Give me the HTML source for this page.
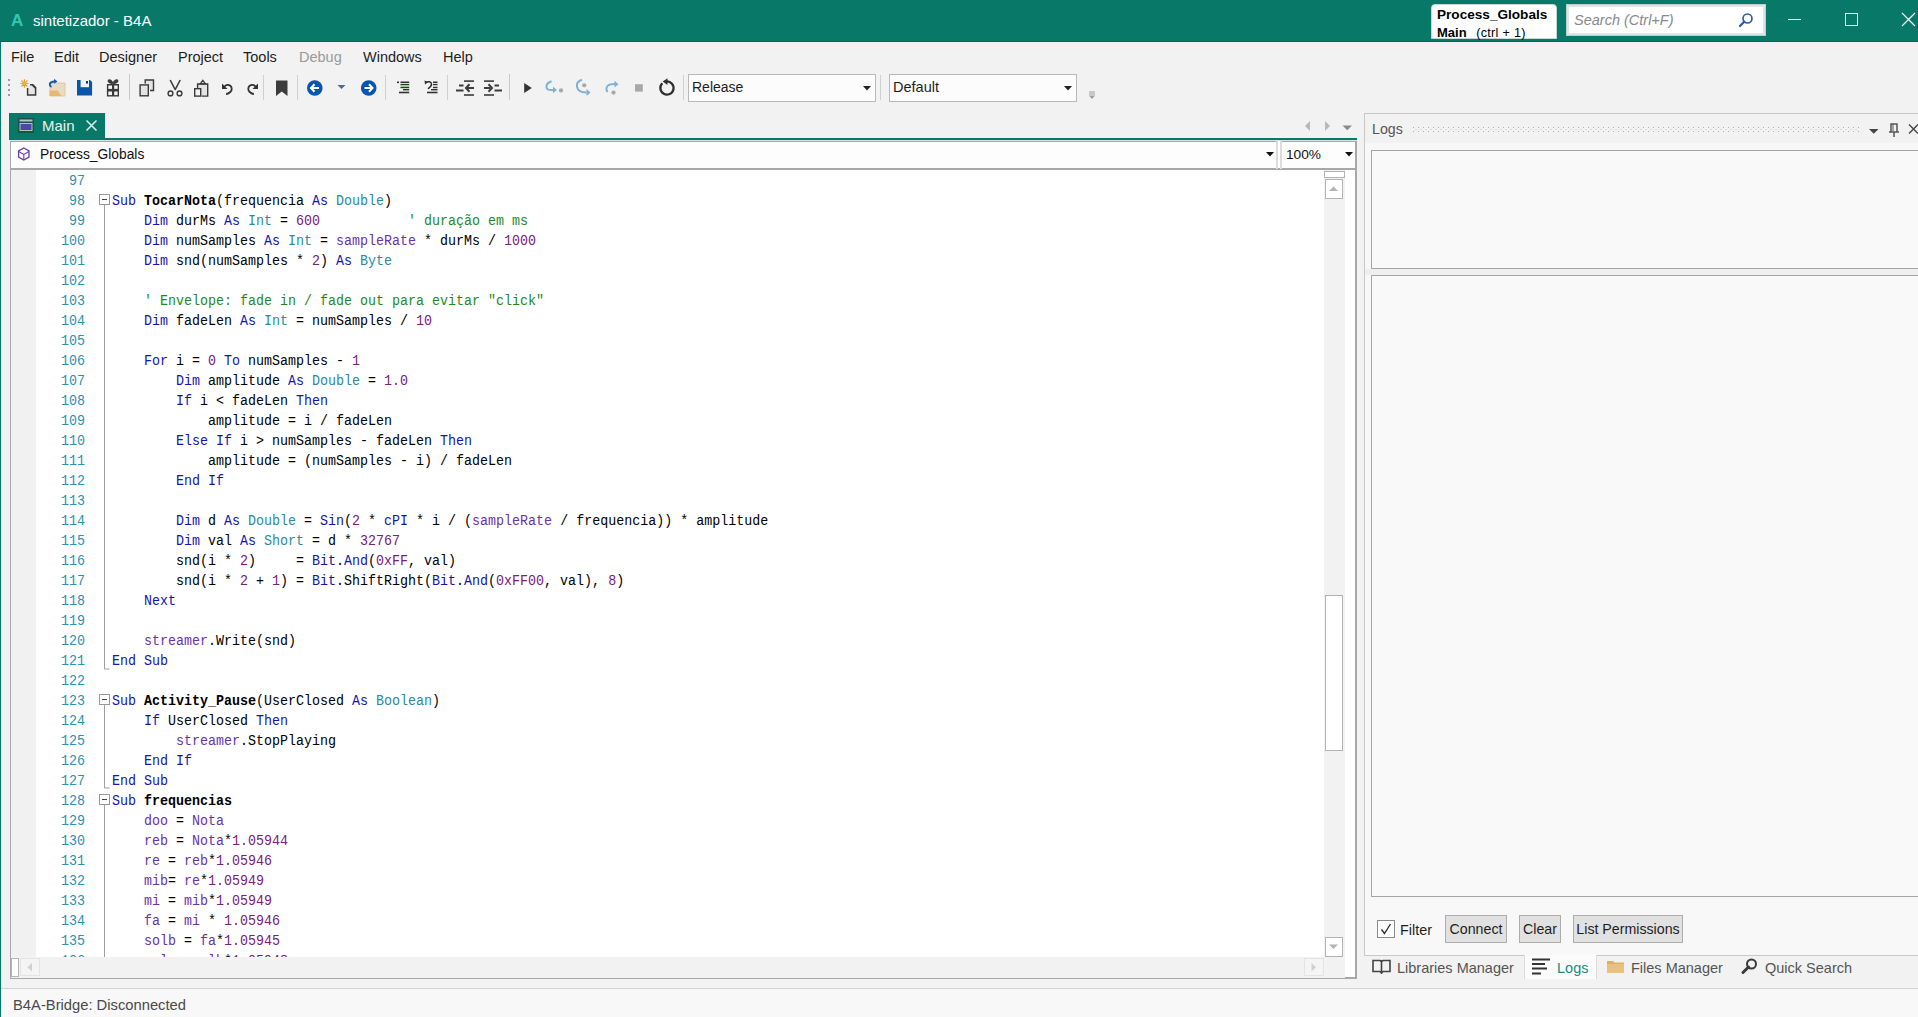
<!DOCTYPE html>
<html><head><meta charset="utf-8">
<style>
*{margin:0;padding:0;box-sizing:border-box}
html,body{width:1918px;height:1017px;overflow:hidden;background:#f2f2f2;font-family:"Liberation Sans",sans-serif;position:relative}
.a{position:absolute}
svg{position:absolute;overflow:visible}
#title{left:0;top:0;width:1918px;height:42px;background:#087969;border-bottom:1px solid #1d5c54}
.menu{top:47px;font-size:14.5px;color:#1e1e1e;white-space:nowrap;line-height:20px}
.code{left:112px;font-family:"Liberation Mono",monospace;font-size:14.5px;white-space:pre;line-height:20px;color:#000;transform:scaleX(0.9195);transform-origin:0 0;margin-top:1px}
.ln{left:45px;font-family:"Liberation Mono",monospace;font-size:14.5px;color:#2b91af;line-height:20px;text-align:right;width:40px;transform:scaleX(0.9195);transform-origin:100% 0;margin-top:1px}
.k{color:#1616a8}
.t{color:#2b8a9c}
.n{color:#7a2078}
.c{color:#1e8a1e}
.g{color:#6a32a8}
.b{font-weight:bold}
.sep{width:1px;height:25px;background:#cfcfcf;top:75px}
.btn{background:#e1e1e1;border:1px solid #adadad;font-size:14.2px;color:#1e1e1e;line-height:27px;text-align:center;white-space:nowrap}
.ui{font-size:15px;color:#1e1e1e;white-space:nowrap}
</style></head><body>
<!-- title bar -->
<div class="a" id="title"></div>
<div class="a" style="left:0;top:43px;width:1918px;height:1px;background:#e2f8f4"></div>
<div class="a" style="left:0;top:42px;width:1px;height:975px;background:#087969"></div>
<div class="a" style="left:1px;top:44px;width:1px;height:973px;background:#e2f8f4"></div>
<div class="a" style="left:11px;top:9px;font-size:17px;font-weight:bold;color:#30c8b0;line-height:24px">A</div>
<div class="a" style="left:33px;top:11px;font-size:15px;color:#fff;line-height:20px;white-space:nowrap">sintetizador - B4A</div>
<div class="a" style="left:1431px;top:4px;width:126px;height:35px;background:#fff;border:1px solid #c8d8d4;border-radius:4px 4px 0 0"></div>
<div class="a" style="left:1437px;top:6px;font-size:13.6px;font-weight:bold;color:#000;line-height:18px;white-space:nowrap">Process_Globals</div>
<div class="a" style="left:1437px;top:24px;font-size:13px;font-weight:bold;color:#000;line-height:17px;white-space:nowrap">Main <span style="font-weight:normal;font-size:12.6px;margin-left:6px;letter-spacing:0.3px">(ctrl + 1)</span></div>
<div class="a" style="left:1566px;top:4px;width:200px;height:32px;background:#dde6e4;border:1px solid #c0cfcc"></div>
<div class="a" style="left:1569px;top:7px;width:194px;height:26px;background:#fff"></div>
<div class="a" style="left:1574px;top:11px;font-size:14.5px;font-style:italic;color:#8a8a8a;line-height:18px;white-space:nowrap">Search (Ctrl+F)</div>
<svg style="left:1738px;top:12px" width="16" height="16" viewBox="0 0 16 16"><circle cx="9.5" cy="6.5" r="4.5" fill="none" stroke="#2a5a9a" stroke-width="1.6"/><line x1="6.3" y1="9.7" x2="2" y2="14" stroke="#2a5a9a" stroke-width="2.2" stroke-linecap="round"/></svg>
<div class="a" style="left:1788px;top:19px;width:13px;height:1px;background:#fff"></div>
<div class="a" style="left:1845px;top:13px;width:13px;height:13px;border:1px solid #fff"></div>
<svg style="left:1901px;top:12px" width="15" height="15" viewBox="0 0 15 15"><path d="M1 1L14 14M14 1L1 14" stroke="#fff" stroke-width="1.2"/></svg>

<!-- menu -->
<div class="a menu" style="left:11px">File</div>
<div class="a menu" style="left:54px">Edit</div>
<div class="a menu" style="left:99px">Designer</div>
<div class="a menu" style="left:178px">Project</div>
<div class="a menu" style="left:243px">Tools</div>
<div class="a menu" style="left:299px;color:#9a9a9a">Debug</div>
<div class="a menu" style="left:363px">Windows</div>
<div class="a menu" style="left:443px">Help</div>

<!-- toolbar -->
<svg style="left:0;top:0" width="1100" height="110" viewBox="0 0 1100 110">
<g fill="#9c9c9c"><rect x="8" y="79" width="2" height="2"/><rect x="8" y="84" width="2" height="2"/><rect x="8" y="89" width="2" height="2"/><rect x="8" y="94" width="2" height="2"/></g>
<!-- new -->
<g stroke="#e8a030" stroke-width="1.2"><path d="M24.4 79.3v8.4M20.2 83.5h8.4M21.4 80.5l6 6M27.4 80.5l-6 6"/></g><circle cx="24.4" cy="83.5" r="1.2" fill="#f0c020"/>
<path d="M27.6 88v7h8v-7.5l-2.8-2.8H30" fill="#e6e6e6" stroke="#3a3a3a" stroke-width="1.5"/><path d="M32.3 85l3.5 3.5" stroke="#3a3a3a" stroke-width="1.5"/>
<!-- open -->
<path d="M50 83h15v13h-15z" fill="#eadcc4" stroke="#e4c89a" stroke-width="1"/>
<path d="M49.5 90.5h8l4 5.5H49.5z" fill="#e8b870"/>
<path d="M51.5 87c-2.5-1.2-2.5-4.5 1.2-5.3l2.5-0.5" stroke="#1a5aa8" stroke-width="1.9" fill="none"/><path d="M54 78.8l3.5 2.7-3.5 2.3z" fill="#1a5aa8"/>
<!-- save -->
<path d="M77 80h13l2.1 2.1V95.4H77z" fill="#0a55aa"/><rect x="80.6" y="80" width="8.4" height="7.2" fill="#eef2f8"/><rect x="86" y="81" width="2" height="2.6" fill="#0a3a7a"/>
<!-- gift -->
<rect x="106.9" y="84" width="12.1" height="12.5" fill="#3a3a3a"/>
<g fill="#f4f4f4"><rect x="108.3" y="85.5" width="3.7" height="3.4"/><rect x="114.2" y="85.5" width="3.4" height="3.4"/><rect x="108.3" y="91.5" width="3.7" height="3.6"/><rect x="114.2" y="91.5" width="3.4" height="3.6"/></g>
<path d="M112.8 83.5c-1-2.5-3.5-4.5-4.3-3-0.6 1.2 1.5 2.8 4.3 3M113.2 83.5c1-2.5 3.5-4.5 4.3-3 0.6 1.2-1.5 2.8-4.3 3" stroke="#3a3a3a" stroke-width="1.6" fill="#3a3a3a"/>
<rect x="129" y="74" width="1" height="26" fill="#c8c8c8"/>
<!-- copy -->
<path d="M145.2 83.5v-3.5h8.3v10.5h-3.5" fill="#e4e4e4" stroke="#3a3a3a" stroke-width="1.4"/>
<rect x="140.1" y="84.9" width="8.2" height="10.9" fill="#e4e4e4" stroke="#3a3a3a" stroke-width="1.4"/>
<!-- cut -->
<path d="M170.2 80l5.2 10M180.2 80l-5.2 10" stroke="#3a3a3a" stroke-width="1.6" fill="none"/>
<circle cx="170.5" cy="93.4" r="2.4" fill="none" stroke="#3a3a3a" stroke-width="1.4"/><circle cx="179.5" cy="93.4" r="2.4" fill="none" stroke="#3a3a3a" stroke-width="1.4"/>
<!-- paste -->
<path d="M197.6 88v-4h10.1v12.1h-6" fill="#e4e4e4" stroke="#3a3a3a" stroke-width="1.4"/><path d="M200.2 83.8l2.6-3.5 2.6 3.5z" fill="none" stroke="#3a3a3a" stroke-width="1.3"/>
<rect x="194.7" y="88.7" width="6" height="7.4" fill="#f4f4f4" stroke="#3a3a3a" stroke-width="1.4"/>
<!-- undo / redo -->
<path d="M224.5 86.5c1.5-2 4-2.2 5.8-0.8s2 4.5 0 6.3-3 2-4.2 2" stroke="#333" stroke-width="1.8" fill="none"/><path d="M222 83.5v5.5h5.5z" fill="#333"/>
<path d="M255.5 86.5c-1.5-2-4-2.2-5.8-0.8s-2 4.5 0 6.3 3 2 4.2 2" stroke="#333" stroke-width="1.8" fill="none"/><path d="M258 83.5v5.5h-5.5z" fill="#333"/>
<rect x="263" y="75" width="1" height="25" fill="#d0d0d0"/>
<!-- bookmark -->
<path d="M276 80.5h11.5V96l-5.75-4.5L276 96z" fill="#3c3c3c"/>
<rect x="297" y="75" width="1" height="25" fill="#d0d0d0"/>
<!-- back / forward -->
<circle cx="314.8" cy="88" r="7.8" fill="#0a55b0"/><path d="M311 88h8M314.5 84.3L311 88l3.5 3.7" stroke="#fff" stroke-width="2" fill="none"/>
<path d="M337.5 85h8l-4 4z" fill="#4a6aa8"/>
<circle cx="368.7" cy="88" r="7.8" fill="#0a55b0"/><path d="M364.5 88h8M369 84.3l3.5 3.7-3.5 3.7" stroke="#fff" stroke-width="2" fill="none"/>
<rect x="385" y="75" width="1" height="25" fill="#d0d0d0"/>
<!-- comment / uncomment -->
<g fill="#333"><rect x="397" y="81.5" width="2" height="1.6"/><rect x="400.5" y="81.5" width="8.7" height="1.6"/><rect x="400.5" y="84" width="8.7" height="1.2"/><rect x="400.5" y="87" width="8.7" height="1.2"/><rect x="403" y="89" width="6.2" height="1.4"/><rect x="399" y="91.7" width="10.2" height="1.6"/></g>
<rect x="400.5" y="85.2" width="8.7" height="1.8" fill="#8fd08f"/>
<g fill="#333"><rect x="433" y="81.5" width="4.5" height="1.6"/><rect x="433" y="84" width="4.5" height="1.2"/><rect x="433" y="87" width="4.5" height="1.2"/><rect x="431" y="89" width="6.5" height="1.4"/><rect x="427" y="91.7" width="10.5" height="1.6"/></g>
<rect x="433" y="85.2" width="4.5" height="1.8" fill="#a8d8a8"/>
<path d="M426 82.5c2.5-1.5 5.5-1 5.5 1.8 0 2-2 3.5-3.5 4.5" stroke="#2e2e2e" stroke-width="1.5" fill="none"/><path d="M424.5 80.5l0.5 4 3-2.5z" fill="#2e2e2e"/>
<rect x="447" y="75" width="1" height="25" fill="#d0d0d0"/>
<!-- outdent / indent -->
<g fill="#3c3c3c"><rect x="464" y="80.3" width="10" height="1.6"/><rect x="464" y="94.2" width="10" height="1.6"/><rect x="459" y="84.5" width="4.5" height="2"/><rect x="456" y="89.5" width="7.5" height="2"/><rect x="467" y="87" width="7" height="2"/>
<rect x="484" y="80.3" width="10" height="1.6"/><rect x="484" y="94.2" width="10" height="1.6"/><rect x="494.5" y="84.5" width="4.5" height="2"/><rect x="494.5" y="89.5" width="7.5" height="2"/><rect x="484" y="87" width="6.5" height="2"/></g>
<path d="M469.5 84.3L466 88l3.5 3.7" stroke="#3c3c3c" stroke-width="2" fill="none"/>
<path d="M488.5 84.3L492 88l-3.5 3.7" stroke="#3c3c3c" stroke-width="2" fill="none"/>
<rect x="509" y="74" width="1" height="26" fill="#c8c8c8"/>
<!-- play -->
<path d="M524.2 83l7.6 5-7.6 5z" fill="#333"/>
<!-- step icons -->
<path d="M551.5 81.3c-3.5 1.2-5.5 3.5-5 6.3 0.5 2.3 3 2.6 6.5 2.4" stroke="#80b0d8" stroke-width="2" fill="none"/><path d="M553 86.8l4 3.2-4 3.2z" fill="#80b0d8"/><circle cx="561" cy="90.4" r="2.1" fill="#a8a8a8"/>
<path d="M582 79.8c-3.5 1-5.5 3.8-5 7 0.6 3.8 4.5 5.5 9.5 5.8" stroke="#80b0d8" stroke-width="2" fill="none"/><path d="M586.5 89l4 3.5-4 3.5z" fill="#80b0d8"/><circle cx="584.2" cy="85.3" r="2.1" fill="#a8a8a8"/>
<path d="M607.5 92c-1.5-2-1.5-5 0.5-6.5 2-1.6 5-1.6 8.5-1.4" stroke="#80b0d8" stroke-width="2" fill="none"/><path d="M614.5 80.8l4 3.4-4 3.4z" fill="#80b0d8"/><circle cx="613.5" cy="92.6" r="2.1" fill="#a8a8a8"/>
<rect x="635" y="84.2" width="7.8" height="7.4" fill="#a8a8a8"/>
<!-- reload -->
<path d="M662.3 83.3a6.6 6.6 0 1 0 4.2-1.9" stroke="#2e2e2e" stroke-width="2.3" fill="none"/><path d="M667.5 78.3v6.6l-4.8-3.4z" fill="#2e2e2e"/>
<rect x="683" y="75" width="1" height="25" fill="#d0d0d0"/>
<rect x="880" y="75" width="1" height="25" fill="#d0d0d0"/>
<path d="M1089 92h6M1089 94h6" stroke="#a0a0a0" stroke-width="1" fill="none"/><path d="M1088.8 95.5h6.4l-3.2 3.5z" fill="#a0a0a0"/>
</svg>
<div class="a" style="left:688px;top:74px;width:188px;height:28px;background:#fcfcfc;border:1px solid #b9b9b9"></div>
<div class="a ui" style="left:692px;top:78px;line-height:19px;font-size:14px">Release</div>
<svg style="left:863px;top:86px" width="8" height="5"><path d="M0 0h8L4 4.5z" fill="#222"/></svg>
<div class="a" style="left:889px;top:74px;width:188px;height:28px;background:#fcfcfc;border:1px solid #b9b9b9"></div>
<div class="a ui" style="left:893px;top:78px;line-height:19px;font-size:14.5px">Default</div>
<svg style="left:1064px;top:86px" width="8" height="5"><path d="M0 0h8L4 4.5z" fill="#222"/></svg>

<!-- document tab strip -->
<div class="a" style="left:9px;top:113px;width:96px;height:26px;background:#087969"></div>
<svg style="left:18px;top:118px" width="17" height="15" viewBox="0 0 17 15"><rect x="0" y="0" width="16" height="15" fill="#1f4f48"/><rect x="1.5" y="1.5" width="13" height="2" fill="#a8c8c0"/><rect x="1.5" y="5" width="13" height="8" fill="#a8c8c0"/><rect x="2.5" y="6" width="11" height="6" fill="#4a4aa0"/></svg>
<div class="a" style="left:42px;top:117px;font-size:15px;color:#e6f5f1;line-height:18px">Main</div>
<svg style="left:86px;top:120px" width="11" height="11" viewBox="0 0 11 11"><path d="M0.5 0.5l10 10M10.5 0.5l-10 10" stroke="#dff2ee" stroke-width="1.5"/></svg>
<div class="a" style="left:9px;top:138px;width:1348px;height:2px;background:#087969"></div>
<svg style="left:1303px;top:120px" width="52" height="14" viewBox="0 0 52 14"><path d="M7 1v10L2 6z" fill="#b8b8b8"/><path d="M22 1v10l5-5z" fill="#b8b8b8"/><path d="M39.5 5.5h9.5l-4.75 4.75z" fill="#8a8a8a"/></svg>

<!-- editor frame -->
<div class="a" style="left:10px;top:140px;width:1347px;height:839px;background:#fff;border:1px solid #a8a8a8;border-width:2px 2px 2px 1px;border-top-color:#a8a8a8"></div>
<div class="a" style="left:10px;top:140px;width:1347px;height:1px;background:#d8e4e2"></div>
<!-- combo row -->
<div class="a" style="left:11px;top:142px;width:1267px;height:26px;background:#fdfdfd"></div>
<div class="a" style="left:1278px;top:141px;width:3px;height:28px;background:#fff"></div>
<div class="a" style="left:1281px;top:142px;width:74px;height:26px;background:#fdfdfd"></div>
<div class="a" style="left:11px;top:168px;width:1344px;height:2px;background:#a8a8a8"></div>
<div class="a" style="left:1276px;top:141px;width:2px;height:28px;background:#dcdcdc"></div>
<div class="a" style="left:1280px;top:141px;width:2px;height:28px;background:#dcdcdc"></div>
<svg style="left:17px;top:147px" width="14" height="15" viewBox="0 0 14 15"><path d="M6.8 1l5.2 3v6L6.8 13 1.6 10V4z" fill="none" stroke="#6a3ea8" stroke-width="1.3"/><path d="M1.6 4.6L6.8 7.4 12 4.6M6.8 7.4V13" fill="none" stroke="#6a3ea8" stroke-width="1.1"/></svg>
<div class="a ui" style="left:40px;top:145px;line-height:19px;color:#111;font-size:13.8px">Process_Globals</div>
<svg style="left:1266px;top:152px" width="8" height="5"><path d="M0 0h8L4 4.5z" fill="#111"/></svg>
<div class="a ui" style="left:1286px;top:145px;line-height:19px;color:#111;font-size:13.7px">100%</div>
<svg style="left:1345px;top:152px" width="8" height="5"><path d="M0 0h8L4 4.5z" fill="#111"/></svg>

<!-- gutter -->
<div class="a" style="left:11px;top:170px;width:25px;height:787px;background:#f1f1f1"></div>
<!-- code -->
<div class="a" style="left:0;top:170px;width:1324px;height:787px;overflow:hidden">
<div class="ln a" style="top:0px">97</div>
<div class="ln a" style="top:20px">98</div>
<div class="code a" style="top:20px"><span class="k">Sub</span> <span class="b">TocarNota</span>(frequencia <span class="k">As</span> <span class="t">Double</span>)</div>
<div class="ln a" style="top:40px">99</div>
<div class="code a" style="top:40px">    <span class="k">Dim</span> durMs <span class="k">As</span> <span class="t">Int</span> = <span class="n">600</span>           <span class="c">' duração em ms</span></div>
<div class="ln a" style="top:60px">100</div>
<div class="code a" style="top:60px">    <span class="k">Dim</span> numSamples <span class="k">As</span> <span class="t">Int</span> = <span class="g">sampleRate</span> * durMs / <span class="n">1000</span></div>
<div class="ln a" style="top:80px">101</div>
<div class="code a" style="top:80px">    <span class="k">Dim</span> snd(numSamples * <span class="n">2</span>) <span class="k">As</span> <span class="t">Byte</span></div>
<div class="ln a" style="top:100px">102</div>
<div class="ln a" style="top:120px">103</div>
<div class="code a" style="top:120px">    <span class="c">' Envelope: fade in / fade out para evitar "click"</span></div>
<div class="ln a" style="top:140px">104</div>
<div class="code a" style="top:140px">    <span class="k">Dim</span> fadeLen <span class="k">As</span> <span class="t">Int</span> = numSamples / <span class="n">10</span></div>
<div class="ln a" style="top:160px">105</div>
<div class="ln a" style="top:180px">106</div>
<div class="code a" style="top:180px">    <span class="k">For</span> i = <span class="n">0</span> <span class="k">To</span> numSamples - <span class="n">1</span></div>
<div class="ln a" style="top:200px">107</div>
<div class="code a" style="top:200px">        <span class="k">Dim</span> amplitude <span class="k">As</span> <span class="t">Double</span> = <span class="n">1.0</span></div>
<div class="ln a" style="top:220px">108</div>
<div class="code a" style="top:220px">        <span class="k">If</span> i &lt; fadeLen <span class="k">Then</span></div>
<div class="ln a" style="top:240px">109</div>
<div class="code a" style="top:240px">            amplitude = i / fadeLen</div>
<div class="ln a" style="top:260px">110</div>
<div class="code a" style="top:260px">        <span class="k">Else If</span> i &gt; numSamples - fadeLen <span class="k">Then</span></div>
<div class="ln a" style="top:280px">111</div>
<div class="code a" style="top:280px">            amplitude = (numSamples - i) / fadeLen</div>
<div class="ln a" style="top:300px">112</div>
<div class="code a" style="top:300px">        <span class="k">End If</span></div>
<div class="ln a" style="top:320px">113</div>
<div class="ln a" style="top:340px">114</div>
<div class="code a" style="top:340px">        <span class="k">Dim</span> d <span class="k">As</span> <span class="t">Double</span> = <span class="k">Sin</span>(<span class="n">2</span> * <span class="k">cPI</span> * i / (<span class="g">sampleRate</span> / frequencia)) * amplitude</div>
<div class="ln a" style="top:360px">115</div>
<div class="code a" style="top:360px">        <span class="k">Dim</span> val <span class="k">As</span> <span class="t">Short</span> = d * <span class="n">32767</span></div>
<div class="ln a" style="top:380px">116</div>
<div class="code a" style="top:380px">        snd(i * <span class="n">2</span>)     = <span class="k">Bit</span>.<span class="k">And</span>(<span class="n">0xFF</span>, val)</div>
<div class="ln a" style="top:400px">117</div>
<div class="code a" style="top:400px">        snd(i * <span class="n">2</span> + <span class="n">1</span>) = <span class="k">Bit</span>.ShiftRight(<span class="k">Bit</span>.<span class="k">And</span>(<span class="n">0xFF00</span>, val), <span class="n">8</span>)</div>
<div class="ln a" style="top:420px">118</div>
<div class="code a" style="top:420px">    <span class="k">Next</span></div>
<div class="ln a" style="top:440px">119</div>
<div class="ln a" style="top:460px">120</div>
<div class="code a" style="top:460px">    <span class="g">streamer</span>.Write(snd)</div>
<div class="ln a" style="top:480px">121</div>
<div class="code a" style="top:480px"><span class="k">End Sub</span></div>
<div class="ln a" style="top:500px">122</div>
<div class="ln a" style="top:520px">123</div>
<div class="code a" style="top:520px"><span class="k">Sub</span> <span class="b">Activity_Pause</span>(UserClosed <span class="k">As</span> <span class="t">Boolean</span>)</div>
<div class="ln a" style="top:540px">124</div>
<div class="code a" style="top:540px">    <span class="k">If</span> UserClosed <span class="k">Then</span></div>
<div class="ln a" style="top:560px">125</div>
<div class="code a" style="top:560px">        <span class="g">streamer</span>.StopPlaying</div>
<div class="ln a" style="top:580px">126</div>
<div class="code a" style="top:580px">    <span class="k">End If</span></div>
<div class="ln a" style="top:600px">127</div>
<div class="code a" style="top:600px"><span class="k">End Sub</span></div>
<div class="ln a" style="top:620px">128</div>
<div class="code a" style="top:620px"><span class="k">Sub</span> <span class="b">frequencias</span></div>
<div class="ln a" style="top:640px">129</div>
<div class="code a" style="top:640px">    <span class="g">doo</span> = <span class="g">Nota</span></div>
<div class="ln a" style="top:660px">130</div>
<div class="code a" style="top:660px">    <span class="g">reb</span> = <span class="g">Nota</span>*<span class="n">1.05944</span></div>
<div class="ln a" style="top:680px">131</div>
<div class="code a" style="top:680px">    <span class="g">re</span> = <span class="g">reb</span>*<span class="n">1.05946</span></div>
<div class="ln a" style="top:700px">132</div>
<div class="code a" style="top:700px">    <span class="g">mib</span>= <span class="g">re</span>*<span class="n">1.05949</span></div>
<div class="ln a" style="top:720px">133</div>
<div class="code a" style="top:720px">    <span class="g">mi</span> = <span class="g">mib</span>*<span class="n">1.05949</span></div>
<div class="ln a" style="top:740px">134</div>
<div class="code a" style="top:740px">    <span class="g">fa</span> = <span class="g">mi</span> * <span class="n">1.05946</span></div>
<div class="ln a" style="top:760px">135</div>
<div class="code a" style="top:760px">    <span class="g">solb</span> = <span class="g">fa</span>*<span class="n">1.05945</span></div>
<div class="ln a" style="top:780px">136</div>
<div class="code a" style="top:780px">    <span class="g">sol</span> = <span class="g">solb</span>*<span class="n">1.05948</span></div>
<!-- fold markers -->
<svg style="left:0;top:0" width="120" height="800" viewBox="0 0 120 800">
<g fill="#fff" stroke="#999" stroke-width="1"><rect x="99.5" y="24.5" width="10" height="10"/><rect x="99.5" y="524.5" width="10" height="10"/><rect x="99.5" y="624.5" width="10" height="10"/></g>
<g stroke="#444" stroke-width="1"><path d="M102 29.5h5M102 529.5h5M102 629.5h5"/></g>
<g stroke="#a0a0a0" stroke-width="1" fill="none"><path d="M104.5 35v464h5M104.5 535v83h5M104.5 635v200"/></g>
</svg>
</div>

<!-- vertical scrollbar -->
<div class="a" style="left:1324px;top:170px;width:21px;height:787px;background:#f2f2f2"></div>
<div class="a" style="left:1324px;top:171px;width:21px;height:7px;background:#fff;border:1px solid #b4b4b4"></div>
<div class="a" style="left:1325px;top:179px;width:18px;height:20px;background:#fff;border:1px solid #b4b4b4"></div>
<svg style="left:1329px;top:186px" width="10" height="6"><path d="M0 5h9L4.5 0.5z" fill="#b4b4b4"/></svg>
<div class="a" style="left:1325px;top:595px;width:18px;height:156px;background:#fff;border:1px solid #b4b4b4"></div>
<div class="a" style="left:1325px;top:937px;width:18px;height:20px;background:#fff;border:1px solid #b4b4b4"></div>
<svg style="left:1329px;top:944px" width="10" height="6"><path d="M0 0.5h9L4.5 5z" fill="#b4b4b4"/></svg>
<!-- horizontal scrollbar -->
<div class="a" style="left:11px;top:957px;width:1334px;height:21px;background:#f2f2f2"></div>
<div class="a" style="left:11px;top:958px;width:8px;height:19px;background:#fff;border:1px solid #b4b4b4"></div>
<div class="a" style="left:20px;top:958px;width:20px;height:18px;background:#f4f4f4;border:1px solid #e4e4e4"></div>
<svg style="left:27px;top:963px" width="6" height="9"><path d="M5 0v8.5L0.5 4.25z" fill="#d0d0d0"/></svg>
<div class="a" style="left:1304px;top:958px;width:20px;height:18px;background:#f4f4f4;border:1px solid #e4e4e4"></div>
<svg style="left:1311px;top:963px" width="6" height="9"><path d="M0.5 0v8.5L5 4.25z" fill="#d0d0d0"/></svg>

<!-- status bar -->
<div class="a" style="left:1px;top:988px;width:1917px;height:1px;background:#d2d2d2"></div>
<div class="a" style="left:1px;top:989px;width:1917px;height:28px;background:#f8f8f8"></div>
<div class="a ui" style="left:13px;top:996px;line-height:19px;color:#4a4a4a;font-size:14.75px">B4A-Bridge: Disconnected</div>

<!-- right panel -->
<div class="a" style="left:1364px;top:113px;width:554px;height:843px;background:#f8f8f8;border:1px solid #c8c8c8;border-right:none"></div>
<div class="a" style="left:1365px;top:114px;width:553px;height:29px;background:#f2f2f2"></div>
<div class="a ui" style="left:1372px;top:120px;line-height:19px;color:#555;font-size:14.2px">Logs</div>
<svg style="left:1413px;top:127px" width="446" height="7"><defs><pattern id="dp" width="5" height="4" patternUnits="userSpaceOnUse"><rect x="0" y="0" width="1" height="1" fill="#b0b0b0"/><rect x="2.5" y="2" width="1" height="1" fill="#c4c4c4"/></pattern></defs><rect width="446" height="6" fill="url(#dp)"/></svg>
<svg style="left:1868px;top:122px" width="50" height="16" viewBox="0 0 50 16"><path d="M1 7h9.5l-4.75 4.75z" fill="#444"/><path d="M23 2h6v8h-6zM21 10h10M26 10v5" fill="none" stroke="#555" stroke-width="1.5"/><path d="M25 2v7" stroke="#555" stroke-width="1"/><path d="M41 2.5l9 9M50 2.5l-9 9" stroke="#444" stroke-width="1.4"/></svg>
<div class="a" style="left:1371px;top:150px;width:547px;height:119px;background:#f9f9f9;border:1px solid #a4a4a4;border-width:1px 0 1px 1px"></div>
<div class="a" style="left:1365px;top:269px;width:553px;height:6px;background:#efefef"></div>
<div class="a" style="left:1371px;top:275px;width:547px;height:622px;background:#f9f9f9;border:1px solid #a4a4a4;border-width:1px 0 1px 1px"></div>
<!-- filter row -->
<div class="a" style="left:1377px;top:920px;width:18px;height:18px;background:#fff;border:1px solid #8a8a8a"></div>
<svg style="left:1380px;top:923px" width="12" height="12" viewBox="0 0 12 12"><path d="M1.5 6.5l3 4 6-9.5" fill="none" stroke="#333" stroke-width="1.4"/></svg>
<div class="a ui" style="left:1400px;top:921px;line-height:19px;font-size:14.4px">Filter</div>
<div class="a btn" style="left:1445px;top:915px;width:62px;height:28px">Connect</div>
<div class="a btn" style="left:1519px;top:915px;width:42px;height:28px">Clear</div>
<div class="a btn" style="left:1573px;top:915px;width:110px;height:28px">List Permissions</div>
<!-- bottom tabs -->
<div class="a" style="left:1524px;top:955px;width:73px;height:24px;background:#fbfbfb;border-left:1px solid #dcdcdc;border-right:1px solid #dcdcdc"></div>
<svg style="left:1372px;top:959px" width="20" height="15" viewBox="0 0 20 15"><path d="M1 1.5h7l1.5 1v11L8 12.5H1zM18 1.5h-7l-1.5 1v11l1.5-1h7z" fill="none" stroke="#444" stroke-width="1.6"/></svg>
<div class="a ui" style="left:1397px;top:959px;line-height:19px;color:#555;font-size:14.5px">Libraries Manager</div>
<svg style="left:1532px;top:958px" width="19" height="18" viewBox="0 0 19 18"><g stroke="#333" stroke-width="2.2"><path d="M0 1.5h18M0 6h13M0 10.5h15M0 15.5h9"/></g></svg>
<div class="a ui" style="left:1557px;top:959px;line-height:19px;color:#1a8a80;font-size:14.5px">Logs</div>
<svg style="left:1607px;top:959px" width="18" height="15" viewBox="0 0 18 15"><path d="M0 2h6l1.5 1.5H17V14H0z" fill="#e0b060"/><path d="M0 5h17v9H0z" fill="#e8c080"/></svg>
<div class="a ui" style="left:1631px;top:959px;line-height:19px;color:#555;font-size:14.5px">Files Manager</div>
<svg style="left:1741px;top:958px" width="17" height="17" viewBox="0 0 17 17"><circle cx="10.5" cy="6" r="4.5" fill="none" stroke="#3a3a3a" stroke-width="2"/><path d="M7.5 9L2 14.5" stroke="#3a3a3a" stroke-width="3" stroke-linecap="round"/></svg>
<div class="a ui" style="left:1765px;top:959px;line-height:19px;color:#555;font-size:14.5px">Quick Search</div>

</body></html>
